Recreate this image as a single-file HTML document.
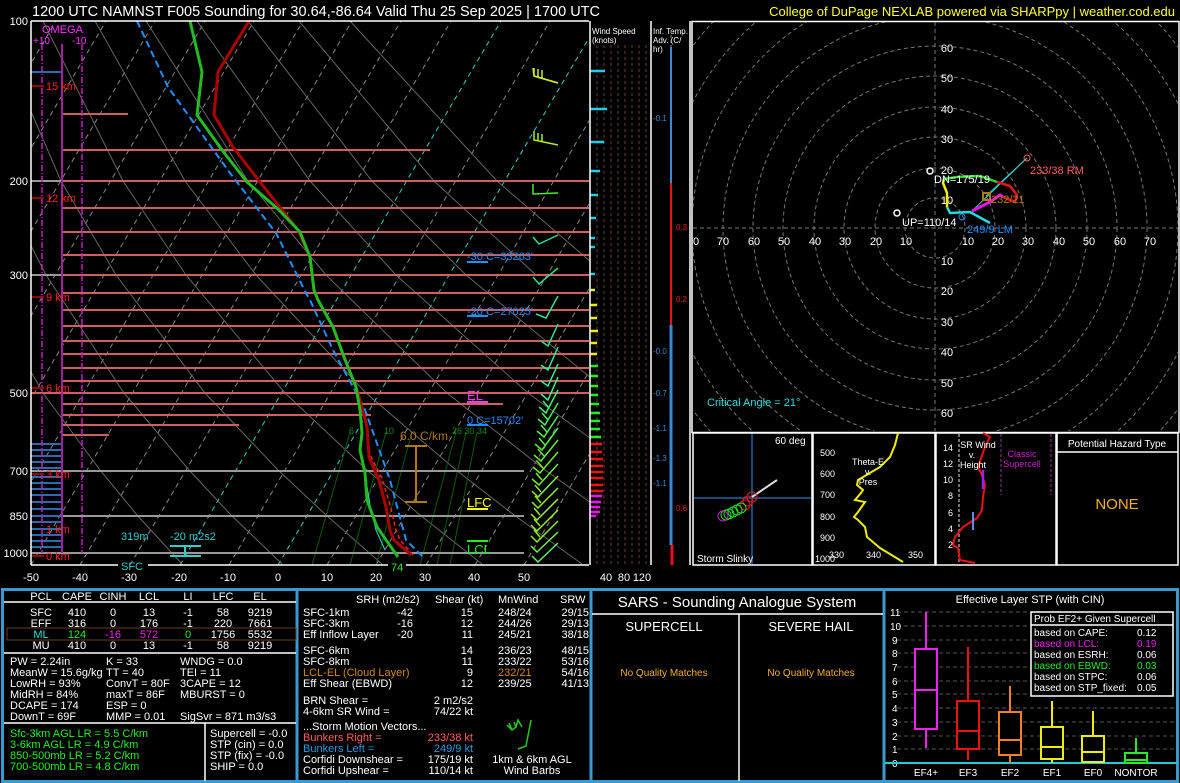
<!DOCTYPE html>
<html><head><meta charset="utf-8"><style>
html,body{margin:0;padding:0;background:#000;}
svg{display:block;font-family:"Liberation Sans",sans-serif;}
</style></head><body>
<svg width="1180" height="783" viewBox="0 0 1180 783" xmlns="http://www.w3.org/2000/svg">
<rect width="1180" height="783" fill="#000"/>
<defs>
<clipPath id="sk"><rect x="31" y="21" width="558" height="544"/></clipPath>
<clipPath id="ho"><rect x="693" y="22" width="485" height="409"/></clipPath>
</defs>
<!-- title -->
<text x="32" y="16" fill="#fff" font-size="14.5">1200 UTC NAMNST F005 Sounding for 30.64,-86.64 Valid  Thu 25 Sep 2025 | 1700 UTC</text>
<text x="1175" y="16" fill="#ffff33" font-size="13" text-anchor="end">College of DuPage NEXLAB powered via SHARPpy | weather.cod.edu</text>

<!-- SKEW-T -->
<g clip-path="url(#sk)">
<g stroke="#888" stroke-width="1" stroke-dasharray="5,4" fill="none">
<line x1="-215" y1="565" x2="106" y2="21"/><line x1="-166" y1="565" x2="155" y2="21"/>
<line x1="-116" y1="565" x2="205" y2="21"/><line x1="-67" y1="565" x2="254" y2="21"/>
<line x1="-18" y1="565" x2="303" y2="21"/><line x1="31" y1="565" x2="352" y2="21"/>
<line x1="80" y1="565" x2="401" y2="21"/><line x1="130" y1="565" x2="451" y2="21"/>
<line x1="229" y1="565" x2="550" y2="21"/><line x1="327" y1="565" x2="648" y2="21"/>
<line x1="376" y1="565" x2="697" y2="21"/><line x1="426" y1="565" x2="747" y2="21"/>
<line x1="475" y1="565" x2="796" y2="21"/><line x1="524" y1="565" x2="845" y2="21"/>
<line x1="-265" y1="565" x2="56" y2="21"/><line x1="-314" y1="565" x2="7" y2="21"/>
</g>
<g stroke="#33cccc" stroke-width="1" stroke-dasharray="5,4" fill="none">
<line x1="180" y1="565" x2="501" y2="21"/><line x1="278" y1="565" x2="599" y2="21"/>
</g>
<g stroke="#666" stroke-width="1" fill="none">
<polyline points="182,564 137,515 100,470 43,393 -24,275"/>
<polyline points="282,564 231,515 189,470 124,393 46,275 -2,181"/>
<polyline points="382,564 326,515 278,470 205,393 116,275 61,181 -8,21"/>
<polyline points="482,564 420,515 367,470 285,393 186,275 123,181 43,21"/>
<polyline points="582,564 514,515 456,470 366,393 256,275 185,181 95,21"/>
<polyline points="608,515 545,470 447,393 326,275 248,181 146,21"/>
<polyline points="634,470 528,393 396,275 310,181 197,21"/>
<polyline points="609,393 466,275 372,181 248,21"/>
<polyline points="536,275 434,181 299,21"/>
<polyline points="606,275 497,181 350,21"/>
</g>
<g stroke="#0a5a0a" stroke-width="1">
<line x1="350" y1="432" x2="312" y2="565"/><line x1="386" y1="432" x2="350" y2="565"/>
<line x1="412" y1="432" x2="376" y2="565"/><line x1="456" y1="432" x2="420" y2="565"/>
<line x1="466" y1="432" x2="437" y2="565"/><line x1="477" y1="432" x2="450" y2="565"/>
</g>
<text x="349" y="434" fill="#0c8a0c" font-size="9">6</text><text x="384" y="434" fill="#0c8a0c" font-size="9">10</text>
<text x="452" y="434" fill="#0c8a0c" font-size="9">26 30 34</text>
</g>
<!-- horizontal lines -->
<g stroke="#d06060" stroke-width="2">
<line x1="61" y1="114" x2="128" y2="114"/><line x1="61" y1="150" x2="430" y2="150"/>
<line x1="61" y1="181" x2="589" y2="181"/><line x1="61" y1="208" x2="589" y2="208"/>
<line x1="61" y1="232" x2="589" y2="232"/><line x1="61" y1="255" x2="589" y2="255"/>
<line x1="61" y1="275" x2="589" y2="275"/><line x1="61" y1="293" x2="589" y2="293"/>
<line x1="61" y1="310" x2="589" y2="310"/><line x1="61" y1="326" x2="589" y2="326"/>
<line x1="61" y1="341" x2="589" y2="341"/><line x1="61" y1="354" x2="589" y2="354"/>
<line x1="61" y1="368" x2="589" y2="368"/><line x1="61" y1="381" x2="589" y2="381"/>
<line x1="31" y1="393" x2="589" y2="393"/><line x1="61" y1="404" x2="503" y2="404"/>
<line x1="61" y1="415" x2="371" y2="415"/><line x1="61" y1="425" x2="239" y2="425"/>
<line x1="61" y1="435" x2="109" y2="435"/>
</g>
<g stroke="#999" stroke-width="2">
<line x1="31" y1="181" x2="61" y2="181"/><line x1="31" y1="275" x2="61" y2="275"/>
<line x1="31" y1="471" x2="524" y2="471"/><line x1="31" y1="516" x2="524" y2="516"/><line x1="31" y1="553" x2="524" y2="553"/>
</g>
<!-- omega -->
<g stroke="#2a6ab0" stroke-width="2">
<line x1="31" y1="72" x2="62" y2="72"/>
<line x1="31" y1="444" x2="62" y2="444"/><line x1="31" y1="450" x2="62" y2="450"/><line x1="31" y1="456" x2="62" y2="456"/>
<line x1="31" y1="462" x2="62" y2="462"/><line x1="31" y1="468" x2="62" y2="468"/><line x1="31" y1="477" x2="62" y2="477"/>
<line x1="31" y1="483" x2="62" y2="483"/><line x1="31" y1="489" x2="62" y2="489"/><line x1="31" y1="495" x2="62" y2="495"/>
<line x1="31" y1="502" x2="62" y2="502"/><line x1="31" y1="509" x2="62" y2="509"/><line x1="31" y1="516" x2="62" y2="516"/>
<line x1="31" y1="522" x2="62" y2="522"/><line x1="31" y1="529" x2="62" y2="529"/><line x1="31" y1="535" x2="62" y2="535"/>
<line x1="31" y1="541" x2="62" y2="541"/><line x1="31" y1="547" x2="62" y2="547"/>
</g>
<line x1="62" y1="44" x2="62" y2="553" stroke="#a020a0" stroke-width="2"/>
<g stroke="#c020c0" stroke-width="1.5" stroke-dasharray="6,2,1,2"><line x1="42" y1="44" x2="42" y2="553"/><line x1="82" y1="44" x2="82" y2="553"/></g>
<text x="42" y="33" fill="#ff33ff" font-size="11">OMEGA</text>
<text x="33" y="44" fill="#ff33ff" font-size="10">+10</text><text x="72" y="44" fill="#ff33ff" font-size="10">-10</text>
<g fill="#ff2020" font-size="11">
<text x="46" y="90">15 km</text><text x="46" y="202">12 km</text><text x="46" y="301">9 km</text>
<text x="46" y="392">6 km</text><text x="46" y="478">3 km</text><text x="46" y="533">1 km</text><text x="46" y="560">0 km</text>
</g>
<g stroke="#990000" stroke-width="2"><line x1="31" y1="86" x2="44" y2="86"/><line x1="31" y1="198" x2="44" y2="198"/><line x1="31" y1="297" x2="44" y2="297"/><line x1="31" y1="388" x2="44" y2="388"/><line x1="31" y1="474" x2="44" y2="474"/><line x1="31" y1="556" x2="44" y2="556"/></g>
<!-- profiles -->
<g fill="none" clip-path="url(#sk)">
<polyline stroke="#1e90ff" stroke-width="2" stroke-dasharray="7,4" points="137,21 168,87 230,173 276,233 306,293 310,300 333,350 364,407 390,480 406,540 423,557"/>
<polyline stroke="#ff2020" stroke-width="1.5" stroke-dasharray="4,3" points="357,395 366,420 370,455 382,478 390,505 396,530 400,540 414,556"/>
<polyline stroke="#33dddd" stroke-width="1" points="362,460 366,480 370,505 376,530 385,550"/>
<polyline stroke="#aa0000" stroke-width="3" points="249,21 218,72 214,115 233,147 260,182 298,230 310,257 314,290 318,300 333,327 344,357 356,387 360,400 367,427 369,457 379,480 386,507 390,530 394,540 411,555"/>
<polyline stroke="#22bb22" stroke-width="3" points="190,21 202,72 197,115 222,150 247,182 279,210 300,232 310,257 314,290 318,300 333,327 344,357 356,387 360,410 362,433 360,450 365,473 367,500 377,527 398,557"/>
</g>
<!-- labels in skewt -->
<g font-size="11">
<text x="467" y="260" fill="#1e90ff">-30 C=33263'</text><line x1="467" y1="262" x2="488" y2="262" stroke="#1e90ff" stroke-width="2"/>
<text x="467" y="315" fill="#1e90ff">-20 C=27025'</text><line x1="467" y1="316" x2="488" y2="316" stroke="#1e90ff" stroke-width="2"/>
<text x="467" y="400" fill="#ff33ff" font-size="13">EL</text><line x1="467" y1="402" x2="488" y2="402" stroke="#ff33ff" stroke-width="2"/>
<text x="467" y="424" fill="#1e90ff">0 C=15702'</text><line x1="467" y1="425" x2="488" y2="425" stroke="#1e90ff" stroke-width="2"/>
<text x="467" y="507" fill="#ffff00" font-size="13">LFC</text><line x1="467" y1="509" x2="488" y2="509" stroke="#ffff00" stroke-width="2"/>
<line x1="467" y1="541" x2="488" y2="541" stroke="#22ee22" stroke-width="2"/><text x="467" y="554" fill="#22ee22" font-size="13">LCL</text>
<text x="400" y="440" fill="#b07a10" font-size="12">6.0 C/km</text>
<text x="121" y="540" fill="#33cccc">319m</text><text x="170" y="540" fill="#33cccc">-20 m2s2</text>
</g>
<g stroke="#b07a10" stroke-width="2"><line x1="416" y1="446" x2="416" y2="502"/><line x1="405" y1="446" x2="427" y2="446"/><line x1="405" y1="502" x2="427" y2="502"/></g>
<g stroke="#33cccc" stroke-width="2"><line x1="170" y1="546" x2="201" y2="546"/><line x1="170" y1="556" x2="201" y2="556"/><line x1="185" y1="546" x2="185" y2="556"/></g>
<!-- wind barbs -->
<g fill="none" stroke-width="1.5">
<polyline stroke="#ccee22" points="558,83 534,76 533,68 M0,0"/>
<path stroke="#ccee22" d="M558,83 L534,76 M534,76 L534,68 M538,77 L538,69 M542,78 L542,70"/>
<path stroke="#aaee22" d="M558,145 L534,140 L534,131 M538,141 L538,133 M542,142 L542,134"/>
<path stroke="#44ee22" d="M558,193 L533,194 L533,184"/>
<path stroke="#33dd88" d="M558,235 L539,244 L533,237"/>
<path stroke="#33dd88" d="M558,268 L539,284 L533,277"/>
<path stroke="#33dd99" d="M558,296 L546,318 L536,314"/>
<path stroke="#33dd99" d="M558,324 L548,346 L541,341"/>
<path stroke="#33ee99" d="M558,347 L548,370 L541,365"/>
<path stroke="#33ee99" d="M558,364 L548,386 L541,381"/>
<path stroke="#44ee88" d="M558,377 L548,400 L541,394"/>
<path stroke="#44ee77" d="M558,390 L546,413 L539,407 M549,408 L543,401"/>
<path stroke="#44ee66" d="M558,403 L545,425 L538,419 M548,420 L542,413"/>
<path stroke="#55ee55" d="M558,416 L544,437 L537,431 M547,432 L541,425"/>
<path stroke="#55ee44" d="M558,428 L542,450 L535,444 M545,445 L539,438"/>
<path stroke="#66ee33" d="M558,440 L541,461 L534,455 M544,456 L538,449"/>
<path stroke="#77ee33" d="M558,452 L540,473 L533,467 M543,468 L537,461"/>
<path stroke="#77ee33" d="M558,464 L539,485 L532,479 M542,480 L536,473"/>
<path stroke="#88ee33" d="M558,476 L538,497 L532,491 M541,492 L535,485"/>
<path stroke="#88ee33" d="M558,488 L538,508 L532,502 M541,503 L535,496"/>
<path stroke="#99ee33" d="M558,499 L537,520 L531,514 M540,515 L534,508"/>
<path stroke="#99ee33" d="M558,510 L537,531 L531,525 M540,526 L534,519"/>
<path stroke="#88ee33" d="M558,521 L537,542 L531,536 M540,537 L534,530"/>
<path stroke="#77ee55" d="M558,532 L537,552 L531,546"/>
<path stroke="#66ee77" d="M558,543 L538,562 L532,556"/>
</g>
<!-- skewt frame -->
<g stroke="#fff" stroke-width="1.5" fill="none">
<line x1="31" y1="21" x2="589" y2="21"/><line x1="31" y1="21" x2="31" y2="565"/>
<line x1="31" y1="565" x2="118" y2="565"/><line x1="148" y1="565" x2="388" y2="565"/><line x1="406" y1="565" x2="589" y2="565"/>
</g>
<text x="121" y="570" fill="#33cccc" font-size="11">SFC</text>
<text x="391" y="571" fill="#22ee22" font-size="11">74</text>
<g fill="#fff" font-size="11">
<text x="28" y="25" text-anchor="end">100</text><text x="28" y="185" text-anchor="end">200</text>
<text x="28" y="279" text-anchor="end">300</text><text x="28" y="397" text-anchor="end">500</text>
<text x="28" y="475" text-anchor="end">700</text><text x="28" y="520" text-anchor="end">850</text>
<text x="28" y="557" text-anchor="end">1000</text>
</g>
<g fill="#fff" font-size="11" text-anchor="middle">
<text x="31" y="581">-50</text><text x="80" y="581">-40</text><text x="129" y="581">-30</text><text x="179" y="581">-20</text>
<text x="228" y="581">-10</text><text x="278" y="581">0</text><text x="327" y="581">10</text><text x="376" y="581">20</text>
<text x="425" y="581">30</text><text x="474" y="581">40</text><text x="524" y="581">50</text>
<text x="606" y="581">40</text><text x="624" y="581">80</text><text x="642" y="581">120</text>
</g>

<!-- wind speed panel -->
<g stroke="#6a4030" stroke-width="1" stroke-dasharray="3,3">
<line x1="597" y1="45" x2="597" y2="565"/><line x1="604" y1="45" x2="604" y2="565"/><line x1="611" y1="45" x2="611" y2="565"/>
<line x1="618" y1="45" x2="618" y2="565"/><line x1="625" y1="45" x2="625" y2="565"/><line x1="632" y1="45" x2="632" y2="565"/>
<line x1="639" y1="45" x2="639" y2="565"/><line x1="646" y1="45" x2="646" y2="565"/>
</g>
<g stroke-width="2.5">
<g stroke="#22ccee"><line x1="590" y1="71" x2="605" y2="71"/><line x1="590" y1="109" x2="607" y2="109"/><line x1="590" y1="142" x2="604" y2="142"/><line x1="590" y1="171" x2="600" y2="171"/><line x1="590" y1="195" x2="598" y2="195"/><line x1="590" y1="218" x2="596" y2="218"/><line x1="590" y1="238" x2="595" y2="238"/><line x1="590" y1="247" x2="595" y2="247"/><line x1="590" y1="274" x2="595" y2="274"/></g>
<g stroke="#eeee00"><line x1="590" y1="290" x2="595" y2="290"/><line x1="590" y1="305" x2="597" y2="305"/><line x1="590" y1="318" x2="597" y2="318"/><line x1="590" y1="331" x2="598" y2="331"/><line x1="590" y1="343" x2="597" y2="343"/><line x1="590" y1="354" x2="597" y2="354"/></g>
<g stroke="#22ee22"><line x1="590" y1="366" x2="598" y2="366"/><line x1="590" y1="376" x2="598" y2="376"/><line x1="590" y1="386" x2="598" y2="386"/><line x1="590" y1="395" x2="598" y2="395"/><line x1="590" y1="404" x2="599" y2="404"/><line x1="590" y1="413" x2="600" y2="413"/><line x1="590" y1="421" x2="600" y2="421"/><line x1="590" y1="429" x2="600" y2="429"/><line x1="590" y1="437" x2="601" y2="437"/></g>
<g stroke="#ee1111"><line x1="590" y1="444" x2="602" y2="444"/><line x1="590" y1="452" x2="602" y2="452"/><line x1="590" y1="459" x2="603" y2="459"/><line x1="590" y1="466" x2="603" y2="466"/><line x1="590" y1="472" x2="603" y2="472"/><line x1="590" y1="478" x2="603" y2="478"/><line x1="590" y1="485" x2="603" y2="485"/><line x1="590" y1="491" x2="603" y2="491"/></g>
<g stroke="#ee11ee"><line x1="590" y1="496" x2="602" y2="496"/><line x1="590" y1="502" x2="601" y2="502"/><line x1="590" y1="507" x2="600" y2="507"/><line x1="590" y1="512" x2="600" y2="512"/><line x1="590" y1="516" x2="596" y2="516"/></g>
</g>
<g stroke="#fff" stroke-width="1.5"><line x1="590" y1="21" x2="590" y2="565"/><line x1="651" y1="21" x2="651" y2="565"/><line x1="690" y1="21" x2="690" y2="565"/></g>
<text x="592" y="34" fill="#fff" font-size="8">Wind Speed</text><text x="592" y="43" fill="#fff" font-size="8">(knots)</text>
<text x="653" y="34" fill="#fff" font-size="8">Inf. Temp.</text><text x="653" y="43" fill="#fff" font-size="8">Adv. (C/</text><text x="653" y="52" fill="#fff" font-size="8">hr)</text>
<line x1="671" y1="30" x2="671" y2="565" stroke="#888" stroke-dasharray="3,2"/>
<g stroke-width="2"><line x1="671" y1="47" x2="671" y2="183" stroke="#3a8ad0"/><line x1="671" y1="183" x2="671" y2="325" stroke="#ee1111"/>
<line x1="671" y1="325" x2="671" y2="545" stroke="#3a8ad0" stroke-width="3"/><line x1="672" y1="545" x2="672" y2="565" stroke="#ee1111" stroke-width="3"/></g>
<g font-size="8"><text x="653" y="121" fill="#3a8ad0">-0.1</text><text x="676" y="230" fill="#ee1111">0.3</text><text x="676" y="302" fill="#ee1111">0.2</text>
<text x="653" y="354" fill="#3a8ad0">-0.0</text><text x="653" y="396" fill="#3a8ad0">-0.7</text><text x="653" y="431" fill="#3a8ad0">-1.1</text>
<text x="653" y="461" fill="#3a8ad0">-1.3</text><text x="653" y="486" fill="#3a8ad0">-1.1</text><text x="676" y="511" fill="#ee1111">0.6</text></g>

<!-- HODOGRAPH -->
<g clip-path="url(#ho)" fill="none" stroke="#777" stroke-dasharray="4,3">
<circle cx="935" cy="228" r="30"/><circle cx="935" cy="228" r="60"/><circle cx="935" cy="228" r="91"/>
<circle cx="935" cy="228" r="121"/><circle cx="935" cy="228" r="152"/><circle cx="935" cy="228" r="182"/>
<circle cx="935" cy="228" r="212"/><circle cx="935" cy="228" r="243"/><circle cx="935" cy="228" r="273"/><circle cx="935" cy="228" r="303"/>
<line x1="693" y1="228" x2="1178" y2="228"/><line x1="935" y1="22" x2="935" y2="431"/>
</g>
<g fill="#fff" font-size="11" text-anchor="middle">
<text x="696" y="245">0</text><text x="723" y="245">70</text><text x="754" y="245">60</text><text x="784" y="245">50</text><text x="815" y="245">40</text><text x="845" y="245">30</text><text x="876" y="245">20</text><text x="906" y="245">10</text>
<text x="968" y="245">10</text><text x="998" y="245">20</text><text x="1028" y="245">30</text><text x="1059" y="245">40</text><text x="1089" y="245">50</text><text x="1120" y="245">60</text><text x="1150" y="245">70</text>
<text x="947" y="52">60</text><text x="947" y="82">50</text><text x="947" y="113">40</text><text x="947" y="143">30</text><text x="947" y="174">20</text><text x="947" y="204">10</text>
<text x="947" y="265">10</text><text x="947" y="295">20</text><text x="947" y="326">30</text><text x="947" y="356">40</text><text x="947" y="387">50</text><text x="947" y="417">60</text>
</g>
<g fill="none">
<line x1="972" y1="211" x2="1027" y2="158" stroke="#33cccc" stroke-width="1"/><line x1="986" y1="196" x2="1027" y2="158" stroke="#33cccc" stroke-width="1"/>
<line x1="972" y1="211" x2="1000" y2="195" stroke="#33cccc" stroke-width="1"/>
<polyline stroke="#22dddd" stroke-width="2.5" points="990,223 970,212 950,213 947,207"/>
<polyline stroke="#eeee00" stroke-width="2.5" points="947,207 947,193 943,183 944,179"/>
<polyline stroke="#22dd22" stroke-width="2.5" points="944,179 957,177 980,176 997,182"/>
<polyline stroke="#ee1111" stroke-width="2.5" points="997,182 1010,186 1017,195 1015,202 1003,197"/>
<polyline stroke="#ee11ee" stroke-width="3" points="1003,197 1000,195 990,202 972,211"/>
<circle cx="1027" cy="158" r="3" stroke="#ff6060"/><circle cx="962" cy="217" r="3" stroke="#1e90ff"/>
<circle cx="930" cy="171" r="3" stroke="#fff" stroke-width="1.5"/><circle cx="897" cy="213" r="3" stroke="#fff" stroke-width="1.5"/>
<rect x="983" y="193" width="7" height="7" stroke="#b07a10" stroke-width="2"/>
</g>
<g font-size="11"><text x="1030" y="174" fill="#ff6060">233/38 RM</text><text x="967" y="233" fill="#1e90ff">249/9 LM</text>
<text x="934" y="183" fill="#fff">DN=175/19</text><text x="902" y="226" fill="#fff">UP=110/14</text><text x="991" y="203" fill="#b07a10">232/21</text>
<text x="707" y="406" fill="#33dddd">Critical Angle = 21°</text></g>
<rect x="692" y="21.5" width="487" height="411" fill="none" stroke="#fff" stroke-width="1.5"/>

<!-- small panels -->
<g stroke="#fff" stroke-width="1.5" fill="none">
<rect x="693" y="433" width="119" height="132"/><rect x="813" y="433" width="122" height="132"/>
<rect x="936" y="433" width="120" height="132"/><rect x="1057" y="433" width="121" height="132"/>
<line x1="1057" y1="452" x2="1178" y2="452"/>
</g>
<g stroke="#1a4a7a" stroke-width="2"><line x1="752" y1="434" x2="752" y2="564"/><line x1="694" y1="498" x2="811" y2="498"/></g>
<line x1="752" y1="497" x2="777" y2="480" stroke="#ddd" stroke-width="2"/>
<g fill="none" stroke-width="1">
<circle cx="752" cy="497" r="5" stroke="#ee1111"/><circle cx="748" cy="501" r="5" stroke="#ee1111"/><circle cx="745" cy="505" r="5" stroke="#ee1111"/>
<circle cx="741" cy="508" r="5" stroke="#22dd22"/><circle cx="737" cy="510" r="5" stroke="#22dd22"/><circle cx="733" cy="512" r="5" stroke="#22dd22"/>
<circle cx="729" cy="514" r="5" stroke="#22dd22"/><circle cx="726" cy="515" r="5" stroke="#22dd22"/><circle cx="723" cy="516" r="5" stroke="#cc22cc"/>
</g>
<text x="775" y="444" fill="#fff" font-size="10">60 deg</text><text x="697" y="562" fill="#fff" font-size="10">Storm Slinky</text>
<polyline fill="none" stroke="#eeee00" stroke-width="2" points="898,433 895,445 890,457 880,467 858,480 857,485 863,490 861,493 855,500 865,502 858,512 854,517 858,520 865,527 867,537 880,548 903,562"/>
<g fill="#fff" font-size="9"><text x="820" y="456">500</text><text x="820" y="477">600</text><text x="820" y="498">700</text><text x="820" y="520">800</text><text x="820" y="541">900</text><text x="815" y="562">1000</text>
<text x="829" y="558">330</text><text x="866" y="558">340</text><text x="908" y="558">350</text>
<text x="868" y="465" text-anchor="middle">Theta-E</text><text x="868" y="475" text-anchor="middle">v.</text><text x="868" y="485" text-anchor="middle">Pres</text></g>
<line x1="959" y1="434" x2="959" y2="564" stroke="#999" stroke-dasharray="3,2" stroke-width="1.5"/>
<g stroke="#662266" stroke-dasharray="3,2" stroke-width="1.5"><line x1="1001" y1="434" x2="1001" y2="495"/><line x1="1051" y1="434" x2="1051" y2="495"/></g>
<polyline fill="none" stroke="#ee1111" stroke-width="2" points="983,433 990,437 985,447 978,467 982,475 985,485 983,497 982,510 977,518 963,527 955,537 953,545 958,548 960,560 975,563"/>
<line x1="983" y1="470" x2="983" y2="489" stroke="#9922ee" stroke-width="2.5"/><line x1="973" y1="512" x2="973" y2="530" stroke="#6688ee" stroke-width="2"/>
<g fill="#fff" font-size="9" text-anchor="end"><text x="953" y="451">14</text><text x="953" y="467">12</text><text x="953" y="483">10</text><text x="953" y="499">8</text><text x="953" y="516">6</text><text x="953" y="532">4</text><text x="953" y="548">2</text></g>
<g fill="#fff" font-size="9" text-anchor="middle"><text x="978" y="448">SR Wind</text><text x="972" y="458">v.</text><text x="973" y="468">Height</text></g>
<g fill="#cc22cc" font-size="9" text-anchor="middle"><text x="1022" y="457">Classic</text><text x="1022" y="467">Supercell</text></g>
<text x="1117" y="447" fill="#fff" font-size="10" text-anchor="middle">Potential Hazard Type</text>
<text x="1117" y="509" fill="#f0b030" font-size="15" text-anchor="middle">NONE</text>

<!-- BOTTOM SECTION -->
<g stroke="#3a9ad0" stroke-width="3" fill="none">
<rect x="2.5" y="589.5" width="1175" height="192"/>
<line x1="297" y1="589" x2="297" y2="782"/><line x1="591" y1="589" x2="591" y2="782"/><line x1="884" y1="589" x2="884" y2="782"/>
</g>
<g stroke="#fff" stroke-width="1.5">
<line x1="4" y1="602" x2="296" y2="602"/><line x1="4" y1="653" x2="296" y2="653"/><line x1="4" y1="723" x2="296" y2="723"/>
<line x1="205" y1="723" x2="205" y2="781"/><line x1="592" y1="614" x2="883" y2="614"/><line x1="739" y1="614" x2="739" y2="781"/>
</g>
<rect x="7" y="628" width="289" height="12" fill="none" stroke="#6a4020" stroke-width="1"/>
<g font-size="11" fill="#fff" text-anchor="middle">
<text x="41" y="600">PCL</text><text x="77" y="600">CAPE</text><text x="113" y="600">CINH</text><text x="149" y="600">LCL</text><text x="188" y="600">LI</text><text x="223" y="600">LFC</text><text x="260" y="600">EL</text>
<text x="41" y="616">SFC</text><text x="77" y="616">410</text><text x="113" y="616">0</text><text x="149" y="616">13</text><text x="188" y="616">-1</text><text x="223" y="616">58</text><text x="260" y="616">9219</text>
<text x="41" y="627">EFF</text><text x="77" y="627">316</text><text x="113" y="627">0</text><text x="149" y="627">176</text><text x="188" y="627">-1</text><text x="223" y="627">220</text><text x="260" y="627">7661</text>
<text x="41" y="638" fill="#33dddd">ML</text><text x="77" y="638" fill="#22ee22">124</text><text x="113" y="638" fill="#ee22ee">-16</text><text x="149" y="638" fill="#ee22ee">572</text><text x="188" y="638" fill="#22ee22">0</text><text x="223" y="638">1756</text><text x="260" y="638">5532</text>
<text x="41" y="649">MU</text><text x="77" y="649">410</text><text x="113" y="649">0</text><text x="149" y="649">13</text><text x="188" y="649">-1</text><text x="223" y="649">58</text><text x="260" y="649">9219</text>
</g>
<g font-size="11" fill="#fff">
<text x="10" y="665">PW = 2.24in</text><text x="106" y="665">K = 33</text><text x="180" y="665">WNDG = 0.0</text>
<text x="10" y="676">MeanW = 15.6g/kg</text><text x="106" y="676">TT = 40</text><text x="180" y="676">TEI = 11</text>
<text x="10" y="687">LowRH = 93%</text><text x="106" y="687">ConvT = 80F</text><text x="180" y="687">3CAPE = 12</text>
<text x="10" y="698">MidRH = 84%</text><text x="106" y="698">maxT = 86F</text><text x="180" y="698">MBURST = 0</text>
<text x="10" y="709">DCAPE = 174</text><text x="106" y="709">ESP = 0</text>
<text x="10" y="720">DownT = 69F</text><text x="106" y="720">MMP = 0.01</text><text x="180" y="720">SigSvr = 871 m3/s3</text>
<text x="210" y="737">Supercell = -0.0</text><text x="210" y="748">STP (cin) = 0.0</text><text x="210" y="759">STP (fix) = -0.0</text><text x="210" y="770">SHIP = 0.0</text>
</g>
<g font-size="11" fill="#22ee22">
<text x="10" y="737">Sfc-3km AGL LR = 5.5 C/km</text><text x="10" y="748">3-6km AGL LR = 4.9 C/km</text>
<text x="10" y="759">850-500mb LR = 5.2 C/km</text><text x="10" y="770">700-500mb LR = 4.8 C/km</text>
</g>
<g font-size="11" fill="#fff">
<text x="356" y="603">SRH (m2/s2)</text><text x="435" y="603">Shear (kt)</text><text x="498" y="603">MnWind</text><text x="560" y="603">SRW</text>
<text x="303" y="616">SFC-1km</text><text x="303" y="627">SFC-3km</text><text x="303" y="638">Eff Inflow Layer</text>
<text x="303" y="654">SFC-6km</text><text x="303" y="665">SFC-8km</text><text x="303" y="676" fill="#d08a20">LCL-EL (Cloud Layer)</text><text x="303" y="687">Eff Shear (EBWD)</text>
<text x="303" y="704">BRN Shear =</text><text x="303" y="715">4-6km SR Wind =</text>
<text x="303" y="730">...Storm Motion Vectors...</text>
<text x="303" y="741" fill="#ff6060">Bunkers Right =</text><text x="303" y="752" fill="#2a9ae0">Bunkers Left =</text>
<text x="303" y="763">Corfidi Downshear =</text><text x="303" y="774">Corfidi Upshear =</text>
<text x="498" y="616">248/24</text><text x="498" y="627">244/26</text><text x="498" y="638">245/21</text><text x="498" y="654">236/23</text><text x="498" y="665">233/22</text><text x="498" y="676" fill="#d08a20">232/21</text><text x="498" y="687">239/25</text>
</g>
<g font-size="11" fill="#fff" text-anchor="end">
<text x="413" y="616">-42</text><text x="413" y="627">-16</text><text x="413" y="638">-20</text>
<text x="473" y="616">15</text><text x="473" y="627">12</text><text x="473" y="638">11</text><text x="473" y="654">14</text><text x="473" y="665">11</text><text x="473" y="676">9</text><text x="473" y="687">12</text>
<text x="589" y="616">29/15</text><text x="589" y="627">29/13</text><text x="589" y="638">38/18</text><text x="589" y="654">48/15</text><text x="589" y="665">53/16</text><text x="589" y="676">54/16</text><text x="589" y="687">41/13</text>
<text x="473" y="704">2 m2/s2</text><text x="473" y="715">74/22 kt</text>
<text x="473" y="741" fill="#ff6060">233/38 kt</text><text x="473" y="752" fill="#2a9ae0">249/9 kt</text><text x="473" y="763">175/19 kt</text><text x="473" y="774">110/14 kt</text>
</g>
<g fill="none" stroke="#22cc22" stroke-width="1.5"><path d="M507,725 L512,730 L516,727 L518,720 L522,727 M516,727 L514,722 M512,730 L509,723 M531,720 L526,746 L518,749"/></g>
<g font-size="11" fill="#fff" text-anchor="middle"><text x="532" y="763">1km &amp; 6km AGL</text><text x="532" y="774">Wind Barbs</text></g>
<!-- SARS -->
<g fill="#fff" text-anchor="middle"><text x="737" y="607" font-size="15">SARS - Sounding Analogue System</text>
<text x="664" y="631" font-size="13">SUPERCELL</text><text x="811" y="631" font-size="13">SEVERE HAIL</text></g>
<g fill="#f0b030" font-size="10" text-anchor="middle"><text x="664" y="676">No Quality Matches</text><text x="811" y="676">No Quality Matches</text></g>
<!-- STP -->
<text x="1030" y="603" fill="#fff" font-size="11" text-anchor="middle">Effective Layer STP (with CIN)</text>
<g stroke="#555" stroke-dasharray="4,3"><line x1="897" y1="612" x2="1176" y2="612"/><line x1="897" y1="626" x2="1176" y2="626"/><line x1="897" y1="640" x2="1176" y2="640"/><line x1="897" y1="653" x2="1176" y2="653"/><line x1="897" y1="667" x2="1176" y2="667"/><line x1="897" y1="681" x2="1176" y2="681"/><line x1="897" y1="694" x2="1176" y2="694"/><line x1="897" y1="708" x2="1176" y2="708"/><line x1="897" y1="722" x2="1176" y2="722"/><line x1="897" y1="736" x2="1176" y2="736"/><line x1="897" y1="749" x2="1176" y2="749"/></g>
<g fill="#fff" font-size="10"><text x="890" y="616">11</text><text x="890" y="630">10</text><text x="892" y="644">9</text><text x="892" y="657">8</text><text x="892" y="671">7</text><text x="892" y="685">6</text><text x="892" y="698">5</text><text x="892" y="712">4</text><text x="892" y="726">3</text><text x="892" y="740">2</text><text x="892" y="753">1</text><text x="892" y="767">0</text></g>
<line x1="885" y1="763" x2="1177" y2="763" stroke="#22cccc" stroke-width="2"/>
<g fill="none" stroke-width="2">
<g stroke="#ee22ee"><line x1="926" y1="612" x2="926" y2="748"/><rect x="915" y="649" width="22" height="80" fill="#000"/><line x1="915" y1="690" x2="937" y2="690"/></g>
<g stroke="#ee1111"><line x1="968" y1="647" x2="968" y2="760"/><rect x="957" y="701" width="22" height="48" fill="#000"/><line x1="957" y1="731" x2="979" y2="731"/></g>
<g stroke="#f08020"><line x1="1010" y1="686" x2="1010" y2="763"/><rect x="999" y="712" width="22" height="43" fill="#000"/><line x1="999" y1="740" x2="1021" y2="740"/></g>
<g stroke="#eeee00"><line x1="1052" y1="701" x2="1052" y2="763"/><rect x="1041" y="727" width="22" height="32" fill="#000"/><line x1="1041" y1="747" x2="1063" y2="747"/></g>
<g stroke="#eeee00"><line x1="1093" y1="711" x2="1093" y2="763"/><rect x="1082" y="736" width="22" height="26" fill="#000"/><line x1="1082" y1="752" x2="1104" y2="752"/></g>
<g stroke="#22ee22"><line x1="1136" y1="738" x2="1136" y2="763"/><rect x="1125" y="753" width="22" height="10" fill="#000"/><line x1="1125" y1="760" x2="1147" y2="760"/></g>
</g>
<g fill="#fff" font-size="10" text-anchor="middle"><text x="926" y="776">EF4+</text><text x="968" y="776">EF3</text><text x="1010" y="776">EF2</text><text x="1052" y="776">EF1</text><text x="1093" y="776">EF0</text><text x="1136" y="776">NONTOR</text></g>
<rect x="1031" y="612" width="142" height="84" fill="#000" stroke="#fff" stroke-width="1.5"/>
<line x1="1031" y1="625" x2="1173" y2="625" stroke="#fff" stroke-width="1.5"/>
<g font-size="10" fill="#fff"><text x="1034" y="622">Prob EF2+ Given Supercell</text>
<text x="1034" y="636">based on CAPE:</text><text x="1137" y="636">0.12</text>
<text x="1034" y="647" fill="#ee22ee">based on LCL:</text><text x="1137" y="647" fill="#ee22ee">0.19</text>
<text x="1034" y="658">based on ESRH:</text><text x="1137" y="658">0.06</text>
<text x="1034" y="669" fill="#22ee22">based on EBWD:</text><text x="1137" y="669" fill="#22ee22">0.03</text>
<text x="1034" y="680">based on STPC:</text><text x="1137" y="680">0.06</text>
<text x="1034" y="691">based on STP_fixed:</text><text x="1137" y="691">0.05</text></g>
</svg>
</body></html>
